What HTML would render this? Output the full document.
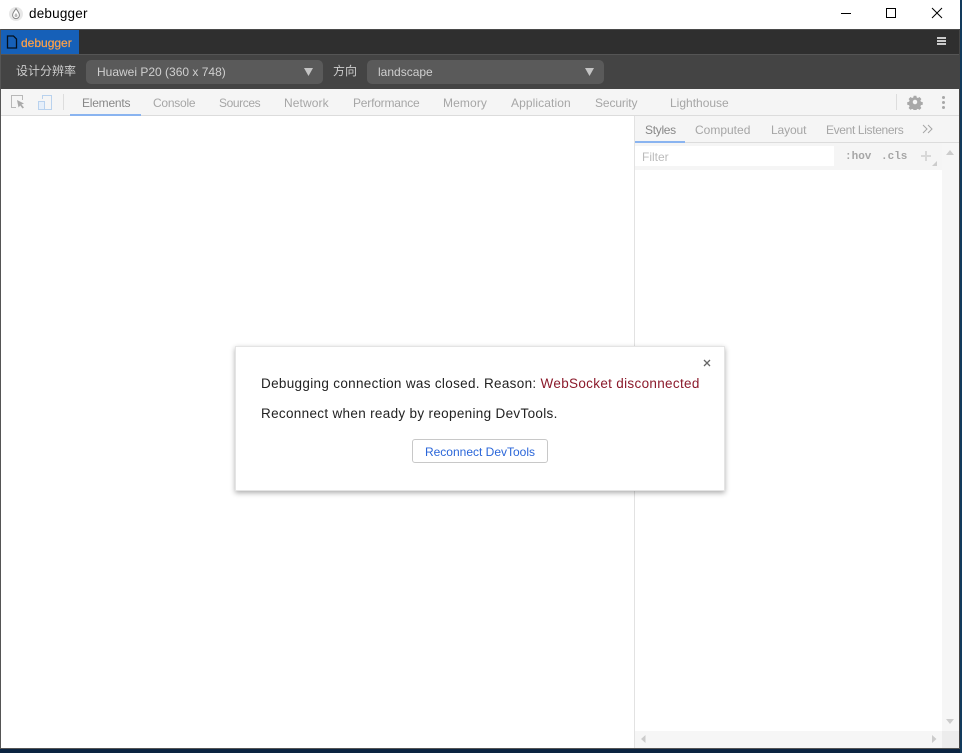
<!DOCTYPE html>
<html><head><meta charset="utf-8"><title>debugger</title>
<style>
html,body{margin:0;padding:0;background:#0a2340}
body{width:962px;height:753px;overflow:hidden;position:relative;font-family:"Liberation Sans","Noto Sans CJK SC",sans-serif}
.a{position:absolute;white-space:nowrap}
.t{position:absolute;white-space:nowrap;font-size:12px;line-height:16px;color:#a6a6a6}
</style></head><body>
<div class="a" style="left:0;top:0;width:960px;height:749px;background:#fff"></div>
<div class="a" style="left:959px;top:29px;width:1px;height:720px;background:#444"></div>
<div class="a" style="left:0;top:29px;width:1px;height:720px;background:#555"></div>
<div class="a" style="left:0;top:748px;width:960px;height:1px;background:#555"></div>
<div class="a" style="left:960px;top:0;width:2px;height:753px;background:#123a5c"></div>

<!-- title bar -->
<svg class="a" style="left:8px;top:6px" width="16" height="16" viewBox="0 0 16 16"><circle cx="8" cy="8" r="7" fill="#e8e8e8"/><path d="M8 2.500C6.500 5 4.600 6.800 4.600 9.200a3.400 3.400 0 0 0 6.800 0C11.400 6.800 9.500 5 8 2.500Z" fill="#fff" stroke="#888" stroke-width="1"/><path d="M8 7c-.8 1-1.500 1.700-1.500 2.600a1.500 1.500 0 0 0 3 0C9.500 8.700 8.800 8 8 7Z" fill="#bbb"/></svg>
<div class="a" style="left:29px;top:5px;font-size:13.500px;line-height:18px;color:#000;letter-spacing:.2px">debugger</div>
<svg class="a" style="left:840px;top:6px" width="110" height="16" viewBox="0 0 110 16" fill="none" stroke="#000" stroke-width="1"><path d="M1 7.500H11"/><rect x="46.500" y="2.500" width="9" height="9"/><path d="M92 2L102 12M102 2L92 12"/></svg>

<!-- tab bar -->
<div class="a" style="left:1px;top:29px;width:958px;height:25px;background:#2f2f2f;border-top:1px solid #4a4a4a;box-sizing:border-box"></div>
<div class="a" style="left:1px;top:54px;width:958px;height:1px;background:#555"></div>
<div class="a" style="left:1px;top:30px;width:78px;height:24px;background:#1660b8"></div>
<svg class="a" style="left:6px;top:35px" width="12" height="14" viewBox="0 0 12 14"><path d="M1.500 1H7.500L10.500 4V13H1.500Z" fill="#1660b8" stroke="#04101f" stroke-width="1.300"/></svg>
<div class="a" style="left:21px;top:35px;font-size:12px;line-height:16px;color:#fba04a;-webkit-text-stroke:.25px #fba04a">debugger</div>
<div class="a" style="left:937px;top:37px;width:9px;height:2px;background:#ccc"></div>
<div class="a" style="left:937px;top:40px;width:9px;height:2px;background:#ccc"></div>
<div class="a" style="left:937px;top:43px;width:9px;height:2px;background:#ccc"></div>

<!-- toolbar -->
<div class="a" style="left:1px;top:55px;width:958px;height:34px;background:#444"></div>
<div class="a" style="left:16px;top:63px;font-size:12px;line-height:17px;color:#ccc">设计分辨率</div>
<div class="a" style="left:86px;top:60px;width:237px;height:24px;background:#5a5a5a;border-radius:5px"></div>
<div class="a" style="left:97px;top:64px;font-size:12px;line-height:16px;color:#cfcfcf">Huawei P20 (360 x 748)</div>
<svg class="a" style="left:304px;top:68px" width="9" height="8"><path d="M0 0H9L4.500 8Z" fill="#c4c4c4"/></svg>
<div class="a" style="left:333px;top:63px;font-size:12px;line-height:17px;color:#ccc">方向</div>
<div class="a" style="left:367px;top:60px;width:237px;height:24px;background:#5a5a5a;border-radius:5px"></div>
<div class="a" style="left:378px;top:64px;font-size:12px;line-height:16px;color:#cfcfcf">landscape</div>
<svg class="a" style="left:585px;top:68px" width="9" height="8"><path d="M0 0H9L4.500 8Z" fill="#c4c4c4"/></svg>

<!-- devtools toolbar -->
<div class="a" style="left:1px;top:89px;width:958px;height:26px;background:#f5f5f5"></div>
<div class="a" style="left:1px;top:115px;width:958px;height:1px;background:#dcdcdc"></div>
<svg class="a" style="left:10px;top:94px" width="16" height="17" viewBox="0 0 16 17" fill="none"><path d="M6 13.500H1.500V1.500H12.500V6" stroke="#b8b8b8"/><path d="M7 6L14 9.500L11.500 10.500L14 13.500L12.500 14.500L10.200 11.500L8.500 13.500Z" fill="#aaa"/></svg>
<svg class="a" style="left:37px;top:94px" width="16" height="17" viewBox="0 0 16 17" fill="none" stroke="#b9d2ee"><path d="M5.500 5V1.500H14.500V15.500H8"/><rect x="1.500" y="7.500" width="6" height="8" fill="#e6effa"/></svg>
<div class="a" style="left:63px;top:94px;width:1px;height:16px;background:#ddd"></div>
<div class="t" style="left:82px;top:95px;color:#888;letter-spacing:-.22px">Elements</div>
<div class="a" style="left:70px;top:114px;width:71px;height:2px;background:#8ab4f0"></div>
<div class="t" style="left:153px;top:95px;letter-spacing:-.25px">Console</div>
<div class="t" style="left:219px;top:95px;letter-spacing:-.4px">Sources</div>
<div class="t" style="left:284px;top:95px;letter-spacing:.1px">Network</div>
<div class="t" style="left:353px;top:95px;letter-spacing:-.2px">Performance</div>
<div class="t" style="left:443px;top:95px;letter-spacing:.12px">Memory</div>
<div class="t" style="left:511px;top:95px;letter-spacing:.1px">Application</div>
<div class="t" style="left:595px;top:95px;letter-spacing:-.12px">Security</div>
<div class="t" style="left:670px;top:95px">Lighthouse</div>
<div class="a" style="left:896px;top:94px;width:1px;height:16px;background:#ddd"></div>
<svg class="a" style="left:907px;top:94px" width="16" height="16" viewBox="0 0 16 16"><path fill="#a8a8a8" fill-rule="evenodd" d="M6.500 1h3l.4 2 1.400.6 1.700-1.100 2.100 2.100-1.100 1.700.6 1.400 2 .4v3l-2 .4-.6 1.400 1.100 1.700-2.100 2.100-1.700-1.100-1.400.6-.4 2h-3l-.4-2-1.400-.6-1.700 1.100-2.100-2.100 1.100-1.700-.6-1.400-2-.4v-3l2-.4.6-1.400-1.100-1.700 2.100-2.100 1.700 1.100 1.400-.6zM8 5.500a2.500 2.500 0 1 0 0 5 2.500 2.500 0 0 0 0-5z" transform="translate(.8 .8) scale(.9)"/></svg>
<div class="a" style="left:942px;top:96px;width:3px;height:3px;border-radius:2px;background:#a8a8a8"></div>
<div class="a" style="left:942px;top:101px;width:3px;height:3px;border-radius:2px;background:#a8a8a8"></div>
<div class="a" style="left:942px;top:106px;width:3px;height:3px;border-radius:2px;background:#a8a8a8"></div>

<!-- sidebar -->
<div class="a" style="left:634px;top:116px;width:1px;height:632px;background:#e2e2e2"></div>
<div class="a" style="left:635px;top:116px;width:324px;height:26px;background:#f5f5f5"></div>
<div class="a" style="left:635px;top:142px;width:324px;height:1px;background:#dcdcdc"></div>
<div class="t" style="left:645px;top:122px;color:#888;letter-spacing:-.3px">Styles</div>
<div class="a" style="left:635px;top:141px;width:50px;height:2px;background:#8ab4f0"></div>
<div class="t" style="left:695px;top:122px">Computed</div>
<div class="t" style="left:771px;top:122px;letter-spacing:-.12px">Layout</div>
<div class="t" style="left:826px;top:122px;letter-spacing:-.35px">Event Listeners</div>
<svg class="a" style="left:922px;top:124px" width="11" height="10" fill="none" stroke="#a6a6a6"><path d="M1 1L5 5L1 9M6 1L10 5L6 9"/></svg>
<div class="a" style="left:635px;top:143px;width:307px;height:27px;background:#f5f5f5"></div>
<div class="a" style="left:635px;top:146px;width:199px;height:20px;background:#fff"></div>
<div class="t" style="left:642px;top:149px;color:#bbb">Filter</div>
<div class="a" style="left:845px;top:149px;font:bold 11px/16px 'Liberation Mono',monospace;color:#a6a6a6">:hov</div>
<div class="a" style="left:881px;top:149px;font:bold 11px/16px 'Liberation Mono',monospace;color:#a6a6a6">.cls</div>
<svg class="a" style="left:920px;top:150px" width="18" height="17"><path d="M1 6H11M6 1V11" stroke="#d8d8d8" stroke-width="2"/><path d="M12 16L17 16L17 11Z" fill="#ccc"/></svg>
<div class="a" style="left:942px;top:143px;width:17px;height:590px;background:#f6f6f6"></div>
<svg class="a" style="left:946px;top:150px" width="9" height="6"><path d="M0 5L4 0L8 5Z" fill="#ccc"/></svg>
<svg class="a" style="left:946px;top:719px" width="9" height="6"><path d="M0 0L8 0L4 5Z" fill="#ccc"/></svg>
<div class="a" style="left:635px;top:731px;width:307px;height:17px;background:#f6f6f6"></div>
<div class="a" style="left:942px;top:731px;width:17px;height:17px;background:#ececec"></div>
<svg class="a" style="left:641px;top:735px" width="5" height="8"><path d="M4.500 0V8L0 4Z" fill="#ccc"/></svg>
<svg class="a" style="left:932px;top:735px" width="5" height="8"><path d="M0 0V8L4.500 4Z" fill="#ccc"/></svg>

<!-- dialog -->
<div class="a" style="left:235px;top:346px;width:490px;height:145px;background:#fff;border:1px solid #e4e4e4;box-sizing:border-box;box-shadow:0 2px 5px rgba(0,0,0,.32)"></div>
<svg class="a" style="left:703px;top:359px" width="8" height="8"><path d="M1 1L7 7M7 1L1 7" stroke="#666" stroke-width="1.300"/></svg>
<div class="a" style="left:261px;top:375px;font-size:13.500px;line-height:17px;color:#222;letter-spacing:.32px">Debugging connection was closed. Reason: <span style="color:#8b1a2b">WebSocket disconnected</span></div>
<div class="a" style="left:261px;top:405px;font-size:13.500px;line-height:17px;color:#222;letter-spacing:.32px">Reconnect when ready by reopening DevTools.</div>
<div class="a" style="left:412px;top:439px;width:136px;height:24px;background:#fff;border:1px solid #c8c8c8;border-radius:3px;box-sizing:border-box;text-align:center;font-size:12px;line-height:24px;color:#2a66d9">Reconnect DevTools</div>
</body></html>
